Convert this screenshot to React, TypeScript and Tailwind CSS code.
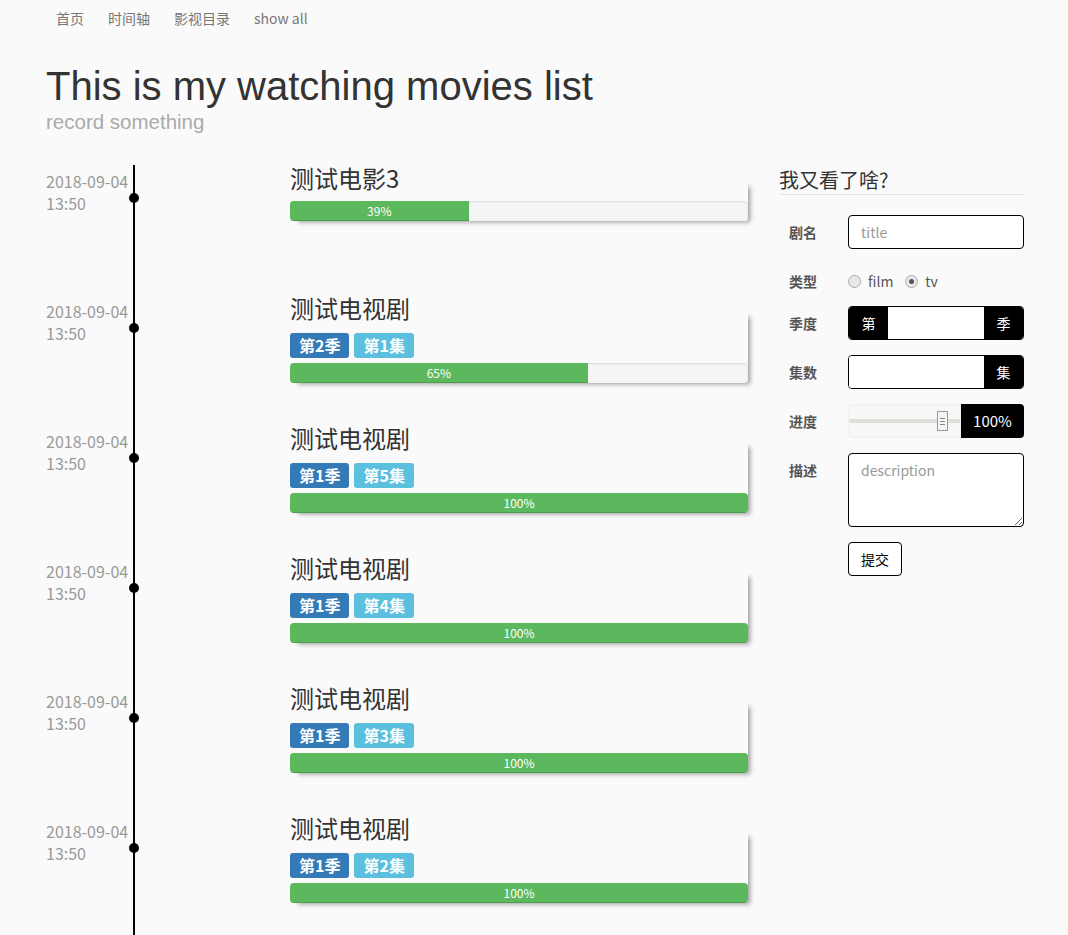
import React from "react";

type Item = {
  title: string;
  type: "film" | "tv";
  season?: number;
  episode?: number;
  progress: number;
};

const items: Item[] = [
  { title: "测试电影3", type: "film", progress: 39 },
  { title: "测试电视剧", type: "tv", season: 2, episode: 1, progress: 65 },
  { title: "测试电视剧", type: "tv", season: 1, episode: 5, progress: 100 },
  { title: "测试电视剧", type: "tv", season: 1, episode: 4, progress: 100 },
  { title: "测试电视剧", type: "tv", season: 1, episode: 3, progress: 100 },
  { title: "测试电视剧", type: "tv", season: 1, episode: 2, progress: 100 },
];

function Progress({ value }: { value: number }) {
  return (
    <div className="h-[20px] rounded-[4px] bg-[#f5f5f5] shadow-[inset_0_1px_2px_rgba(0,0,0,0.1)] overflow-hidden">
      <div
        className="h-full bg-[#5cb85c] shadow-[inset_0_-1px_0_rgba(0,0,0,0.15)] text-white text-[12px] leading-[20px] text-center"
        style={{ width: `${value}%` }}
      >
        {value}%
      </div>
    </div>
  );
}

function TimelineRow({ item }: { item: Item }) {
  return (
    <div className="flex h-[130px]">
      <div className="w-[87px] pt-[5px] text-[16px] leading-[22px] text-[#999]">
        <div>2018-09-04</div>
        <div>13:50</div>
      </div>
      <div className="relative border-l-2 border-black pl-[155px]">
        <span className="absolute left-[-6px] top-[28px] w-[10px] h-[10px] rounded-full bg-black"></span>
        <div className="flow-root w-[458px] mt-[15px] bg-[#fafafa] shadow-[5px_4px_5px_-3px_rgba(0,0,0,0.4)] rounded-[4px]">
          <h3 className="-mt-[15px] text-[24px] leading-[26px] text-[#333]">{item.title}</h3>
          {item.type === "tv" ? (
            <>
              <div className="flex gap-[5px] mt-[12px]">
                <span className="h-[25px] px-[9px] rounded-[3px] bg-[#337ab7] text-white font-bold text-[16px] leading-[25px]">
                  第{item.season}季
                </span>
                <span className="h-[25px] px-[9px] rounded-[3px] bg-[#5bc0de] text-white font-bold text-[16px] leading-[25px]">
                  第{item.episode}集
                </span>
              </div>
              <div className="mt-[5px]">
                <Progress value={item.progress} />
              </div>
            </>
          ) : (
            <div className="mt-[10px]">
              <Progress value={item.progress} />
            </div>
          )}
        </div>
      </div>
    </div>
  );
}

function Radio({ checked, label }: { checked?: boolean; label: string }) {
  return (
    <span className="flex items-center gap-[7px] text-[14px] text-[#555]">
      <span className="w-[13px] h-[13px] rounded-full border border-[#aaa] bg-[#e8e8e8] flex items-center justify-center">
        {checked && <span className="w-[5px] h-[5px] rounded-full bg-[#555]"></span>}
      </span>
      {label}
    </span>
  );
}

function FormLabel({ children }: { children: React.ReactNode }) {
  return (
    <div className="w-[69px] pl-[10px] text-[14px] leading-[34px] font-bold text-[#555]">{children}</div>
  );
}

export default function App() {
  return (
    <div className="min-h-screen bg-[#fafafa] font-['Noto_Sans_CJK_SC','Liberation_Sans',sans-serif] overflow-hidden">
      <nav className="flex gap-6 pl-[56px] pt-[8px] h-[36px] text-[14px] text-[#777]">
        <span>首页</span>
        <span>时间轴</span>
        <span>影视目录</span>
        <span>show all</span>
      </nav>

      <header className="pl-[46px] pt-[28px]">
        <h1 className="font-['Liberation_Sans',sans-serif] text-[40px] leading-[44px] text-[#333]">
          This is my watching movies list
        </h1>
        <p className="font-['Liberation_Sans',sans-serif] text-[20.5px] leading-[24px] text-[#aaa] mt-[2px]">
          record something
        </p>
      </header>

      <main className="flex pl-[46px] mt-[31px]">
        <div className="w-[733px]">
          {items.map((item, i) => (
            <TimelineRow key={i} item={item} />
          ))}
        </div>

        <aside className="w-[245px]">
          <h2 className="text-[20px] leading-[28px] pt-[1px] text-[#333] border-b border-[#e5e5e5]">我又看了啥?</h2>

          <div className="flex mt-[20px]">
            <FormLabel>剧名</FormLabel>
            <input
              placeholder="title"
              className="w-[176px] h-[34px] border border-black rounded-[4px] bg-white px-[12px] text-[14px] placeholder:text-[#999] outline-none"
            />
          </div>

          <div className="flex mt-[15px]">
            <FormLabel>类型</FormLabel>
            <div className="flex items-center gap-[12px] h-[34px]">
              <Radio label="film" />
              <Radio label="tv" checked />
            </div>
          </div>

          <div className="flex mt-[8px]">
            <FormLabel>季度</FormLabel>
            <div className="flex w-[176px] h-[34px] rounded-[4px] border border-black overflow-hidden text-[14px]">
              <span className="w-[39px] bg-black text-white flex items-center justify-center">第</span>
              <input className="flex-1 min-w-0 bg-white outline-none px-[8px]" />
              <span className="w-[39px] bg-black text-white flex items-center justify-center">季</span>
            </div>
          </div>

          <div className="flex mt-[15px]">
            <FormLabel>集数</FormLabel>
            <div className="flex w-[176px] h-[34px] rounded-[4px] border border-black overflow-hidden text-[14px]">
              <input className="flex-1 min-w-0 bg-white outline-none px-[8px]" />
              <span className="w-[39px] bg-black text-white flex items-center justify-center">集</span>
            </div>
          </div>

          <div className="flex mt-[15px]">
            <FormLabel>进度</FormLabel>
            <div className="flex w-[176px] h-[34px]">
              <div className="relative flex-1 flex items-center bg-[#f7f7f7] border border-[#f0f0f0] rounded-l-[4px]">
                <div className="w-full h-[4px] bg-[#e2dfda]"></div>
                <span className="absolute left-[88px] top-[6px] w-[11px] h-[20px] border border-[#999] bg-[#f4f4f4] flex flex-col items-center justify-center gap-[2px]">
                  <span className="w-[5px] h-px bg-[#888]"></span>
                  <span className="w-[5px] h-px bg-[#888]"></span>
                  <span className="w-[5px] h-px bg-[#888]"></span>
                </span>
              </div>
              <span className="w-[63px] bg-black text-white rounded-r-[4px] flex items-center justify-center text-[15px]">
                100%
              </span>
            </div>
          </div>

          <div className="flex mt-[15px]">
            <FormLabel>描述</FormLabel>
            <textarea
              placeholder="description"
              className="w-[176px] h-[74px] border border-black rounded-[4px] bg-white px-[12px] py-[6px] text-[14px] placeholder:text-[#999] outline-none"
            />
          </div>

          <div className="flex mt-[15px] pl-[69px]">
            <button className="w-[54px] h-[34px] border border-black rounded-[4px] bg-white text-[14px] text-black">
              提交
            </button>
          </div>
        </aside>
      </main>
    </div>
  );
}
